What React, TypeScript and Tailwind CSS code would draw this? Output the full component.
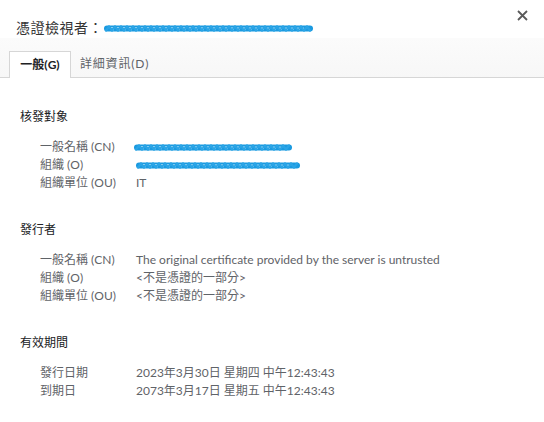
import React from 'react';

const font = { fontFamily: 'Lato, "Noto Sans CJK TC", "Noto Sans", sans-serif' };

// blue marker scribble used to hide text
const Scribble = ({ width }: { width: number }) => {
  const pts: string[] = [];
  for (let x = 3; x < width - 3; x += 3) {
    pts.push(`${x},${x % 6 === 0 ? 2 : 6}`);
  }
  return (
    <svg width={width} height={9} viewBox={`0 0 ${width} 8`} className="block">
      <path d={`M4 4 L${width - 4} 4`} stroke="#1a9ae0" strokeWidth={6} strokeLinecap="round" />
      <polyline points={pts.join(' ')} fill="none" stroke="#2aa4e6" strokeWidth={2.2} strokeLinecap="round" />
      <path d={`M8 3 L${width - 10} 3.5`} stroke="#86ccf0" strokeWidth={1} strokeDasharray="2 4" />
      <path d={`M10 5.5 L${width - 12} 5`} stroke="#6bbfee" strokeWidth={0.8} strokeDasharray="1 5" />
    </svg>
  );
};

type Row = { label: string; value: React.ReactNode };

const Section = ({ title, rows, first }: { title: string; rows: Row[]; first?: boolean }) => (
  <div className={first ? '' : 'mt-[29px]'}>
    <div className="text-[12px] leading-[18px] text-[#202124]">{title}</div>
    <div className="mt-3 pl-5">
      {rows.map((r) => (
        <div key={r.label} className="flex h-[18px] items-center text-[12px] leading-[18px] text-[#5f6368]">
          <div className="w-[96px] shrink-0">{r.label}</div>
          <div>{r.value}</div>
        </div>
      ))}
    </div>
  </div>
);

const App = () => {
  return (
    <div className="relative h-[422px] w-[544px] overflow-hidden bg-white" style={font}>
      <div className="flex h-[38px] items-center pl-4 pt-[16px]">
        <span className="text-[14px] tracking-[0.5px] text-[#333]">憑證檢視者：</span>
        <span className="mt-[2px]"><Scribble width={211} /></span>
      </div>
      <button className="absolute right-[14px] top-[7px] flex h-4 w-4 items-center justify-center">
        <svg width="11" height="11" viewBox="0 0 11 11">
          <path d="M1 1 L10 10 M10 1 L1 10" stroke="#5a5a5a" strokeWidth="1.8" />
        </svg>
      </button>

      <div className="flex h-[40px] items-end border-b border-[#d6d6d6] bg-gradient-to-b from-[#fbfbfb] to-[#f7f7f7] pl-[9px]">
        <div className="-mb-px flex h-[27px] w-[62px] items-center justify-center border border-b-0 border-[#d6d6d6] bg-white text-[12px] font-bold text-[#202124]">
          一般(G)
        </div>
        <div className="flex h-[26px] items-center px-[9px] text-[12px] tracking-[0.8px] text-[#5f6368]">詳細資訊(D)</div>
      </div>

      <div className="pl-5 pt-[30px]">
        <Section
          first
          title="核發對象"
          rows={[
            { label: '一般名稱 (CN)', value: <span className="-ml-[3px] block"><Scribble width={160} /></span> },
            { label: '組織 (O)', value: <span className="-ml-[1px] block"><Scribble width={166} /></span> },
            { label: '組織單位 (OU)', value: 'IT' },
          ]}
        />
        <Section
          title="發行者"
          rows={[
            { label: '一般名稱 (CN)', value: 'The original certificate provided by the server is untrusted' },
            { label: '組織 (O)', value: '<不是憑證的一部分>' },
            { label: '組織單位 (OU)', value: '<不是憑證的一部分>' },
          ]}
        />
        <Section
          title="有效期間"
          rows={[
            { label: '發行日期', value: '2023年3月30日 星期四 中午12:43:43' },
            { label: '到期日', value: '2073年3月17日 星期五 中午12:43:43' },
          ]}
        />
      </div>
    </div>
  );
};

export default App;
